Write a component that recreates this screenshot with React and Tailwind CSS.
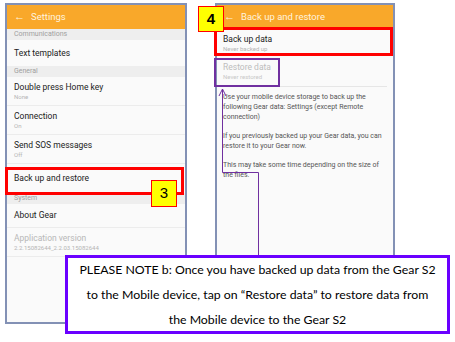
import React from 'react';

const Sub = ({ label }) => (
  <div className="h-[11px] bg-[#eeeeee] pl-[7px] text-[7px] leading-[11px] text-[#a0a0a0]">{label}</div>
);

const Row = ({ title, sub, h = 'h-[29px]', muted, divider = true }) => (
  <div className={`${h} flex flex-col justify-center pl-[7px] ${divider ? 'border-b border-[#ececec]' : ''}`}>
    <div className={`text-[8.5px] leading-[11px] ${muted ? 'text-[#b8b8b8]' : 'text-[#222]'}`}>{title}</div>
    {sub && <div className="text-[6px] leading-[8px] text-[#b5b5b5]">{sub}</div>}
  </div>
);

const Header = ({ title }) => (
  <div className="h-[24px] bg-[#f9a82a] flex items-center gap-[6px] pl-[7px] text-[9.5px] text-[#fff3de]">
    <span className="text-[11px]">←</span>
    <span>{title}</span>
  </div>
);

export default function App() {
  return (
    <div className="relative w-[455px] h-[342px] bg-white overflow-hidden" style={{ fontFamily: 'Roboto, sans-serif' }}>
      <div className="flex gap-[28px] pt-[3px] pl-[5px]">
        {/* left phone */}
        <div className="w-[182px] h-[321px] border-2 border-[#8391b5] bg-[#fafafa] flex flex-col">
          <Header title="Settings" />
          <Sub label="Communications" />
          <Row title="Text templates" h="h-[26px]" divider={false} />
          <Sub label="General" />
          <Row title="Double press Home key" sub="None" />
          <Row title="Connection" sub="On" />
          <Row title="Send SOS messages" sub="Off" />
          <Row title="Back up and restore" divider={false} />
          <Sub label="System" />
          <Row title="About Gear" h="h-[24px]" />
          <Row title="Application version" sub="2.2.15082644_2.2.03.15082644" muted />
        </div>
        {/* right phone */}
        <div className="w-[180px] h-[321px] border-2 border-[#8391b5] bg-[#fafafa] flex flex-col">
          <Header title="Back up and restore" />
          <div className="px-[6px]">
            <div className="h-[28px] flex flex-col justify-center">
              <div className="text-[8.5px] leading-[11px] text-[#222]">Back up data</div>
              <div className="text-[6px] leading-[8px] text-[#b5b5b5]">Never backed up</div>
            </div>
            <div className="h-[30px] flex flex-col justify-center border-b border-[#e6e6e6]">
              <div className="text-[8.5px] leading-[11px] text-[#bdbdbd]">Restore data</div>
              <div className="text-[6px] leading-[8px] text-[#c8c8c8]">Never restored</div>
            </div>
            <div className="pt-[5px] flex flex-col gap-[9px] text-[7px] leading-[10px] text-[#555]">
              <p>Use your mobile device storage to back up the following Gear data: Settings (except Remote connection)</p>
              <p>If you previously backed up your Gear data, you can restore it to your Gear now.</p>
              <p>This may take some time depending on the size of the files.</p>
            </div>
          </div>
        </div>
      </div>

      {/* annotations */}
      <div className="absolute left-[5px] top-[167px] w-[179px] h-[28px] border-[3px] border-[#ff0000]" />
      <div className="absolute left-[151px] top-[180px] w-[26px] h-[27px] bg-[#ffff00] border border-[#ff0000] flex items-center justify-center text-[15px] text-black" style={{ fontFamily: '"Liberation Sans", sans-serif' }}>3</div>

      <div className="absolute left-[214px] top-[27px] w-[179px] h-[29px] border-[3px] border-[#ff0000]" />
      <div className="absolute left-[214px] top-[58px] w-[66px] h-[29px] border-2 border-[#7030a0]" />
      <div className="absolute left-[198px] top-[6px] w-[26px] h-[26px] bg-[#ffff00] border border-[#ff0000] flex items-center justify-center text-[15px] font-bold text-black" style={{ fontFamily: '"Liberation Sans", sans-serif' }}>4</div>

      <svg className="absolute left-0 top-0" width="455" height="342">
        <polyline points="222.5,89 222.5,172.5 258.5,172.5 258.5,256" fill="none" stroke="#7030a0" strokeWidth="1" />
        <polyline points="219,96 222.5,89 226,96" fill="none" stroke="#7030a0" strokeWidth="1" />
      </svg>

      <div className="absolute left-[65px] top-[255px] w-[385px] h-[79px] border-[3px] border-[#6a00ff] bg-white flex flex-col items-center justify-center text-[12.3px] leading-[25px] text-black whitespace-nowrap" style={{ fontFamily: 'Lato, sans-serif' }}>
        <div>PLEASE NOTE b: Once you have backed up data from the Gear S2</div>
        <div>to the Mobile device, tap on “Restore data” to restore data from</div>
        <div>the Mobile device to the Gear S2</div>
      </div>
    </div>
  );
}
